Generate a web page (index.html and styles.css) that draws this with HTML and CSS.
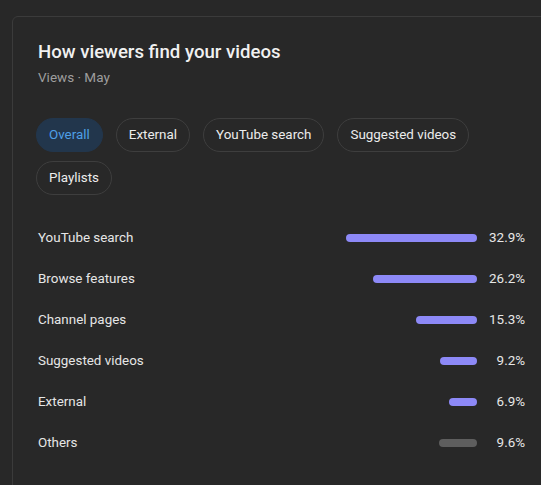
FILE: index.html
```html
<!DOCTYPE html>
<html>
<head>
<meta charset="utf-8">
<link rel="stylesheet" href="styles.css">
</head>
<body>
<div class="card">
  <h2 class="title">How viewers find your videos</h2>
  <div class="subtitle">Views · May</div>
  <div class="chips">
    <span class="chip active">Overall</span>
    <span class="chip">External</span>
    <span class="chip">YouTube search</span>
    <span class="chip">Suggested videos</span>
    <span class="chip">Playlists</span>
  </div>
  <div class="rows">
    <div class="row"><span class="label">YouTube search</span><span class="bar-wrap"><span class="bar" style="width:131px"></span></span><span class="pct">32.9%</span></div>
    <div class="row"><span class="label">Browse features</span><span class="bar-wrap"><span class="bar" style="width:104px"></span></span><span class="pct">26.2%</span></div>
    <div class="row"><span class="label">Channel pages</span><span class="bar-wrap"><span class="bar" style="width:61px"></span></span><span class="pct">15.3%</span></div>
    <div class="row"><span class="label">Suggested videos</span><span class="bar-wrap"><span class="bar" style="width:37px"></span></span><span class="pct">9.2%</span></div>
    <div class="row"><span class="label">External</span><span class="bar-wrap"><span class="bar" style="width:28px"></span></span><span class="pct">6.9%</span></div>
    <div class="row"><span class="label">Others</span><span class="bar-wrap"><span class="bar other" style="width:38px"></span></span><span class="pct">9.6%</span></div>
  </div>
</div>
</body>
</html>
```
FILE: styles.css
```css
html, body {
  margin: 0;
  padding: 0;
  background: #282828;
  font-family: Roboto, "Liberation Sans", sans-serif;
  overflow: hidden;
}
.card {
  margin: 16px 0 0 12px;
  width: 487px;
  border: 1px solid #3b3b3b;
  border-radius: 6px 0 0 0;
  padding: 23px 27px 40px 25px;
  background: #282828;
}
.title {
  margin: 0;
  font-size: 18.6px;
  font-weight: 500;
  line-height: 24px;
  color: #f1f1f1;
}
.subtitle {
  margin-top: 3px;
  font-size: 13.5px;
  line-height: 20px;
  color: #9e9e9e;
}
.chips {
  display: flex;
  flex-wrap: wrap;
  gap: 9px 13px;
  margin: 31px 0 0 -2px;
  width: 460px;
}
.chip {
  box-sizing: border-box;
  height: 34px;
  line-height: 32px;
  padding: 0 12px;
  border: 1px solid #3e3e3e;
  border-radius: 17px;
  font-size: 13.4px;
  color: #ececec;
}
.chip.active {
  background: #22364c;
  border-color: #22364c;
  color: #4e9fe6;
}
.rows {
  margin-top: 22px;
}
.row {
  display: flex;
  align-items: center;
  height: 41px;
  font-size: 13.4px;
  color: #e6e6e6;
}
.label {
  flex: 1;
}
.bar-wrap {
  display: flex;
  justify-content: flex-end;
}
.bar {
  height: 8px;
  border-radius: 4px;
  background: #8d89f7;
}
.bar.other {
  background: #5e5e5e;
}
.pct {
  width: 48px;
  text-align: right;
}
```
